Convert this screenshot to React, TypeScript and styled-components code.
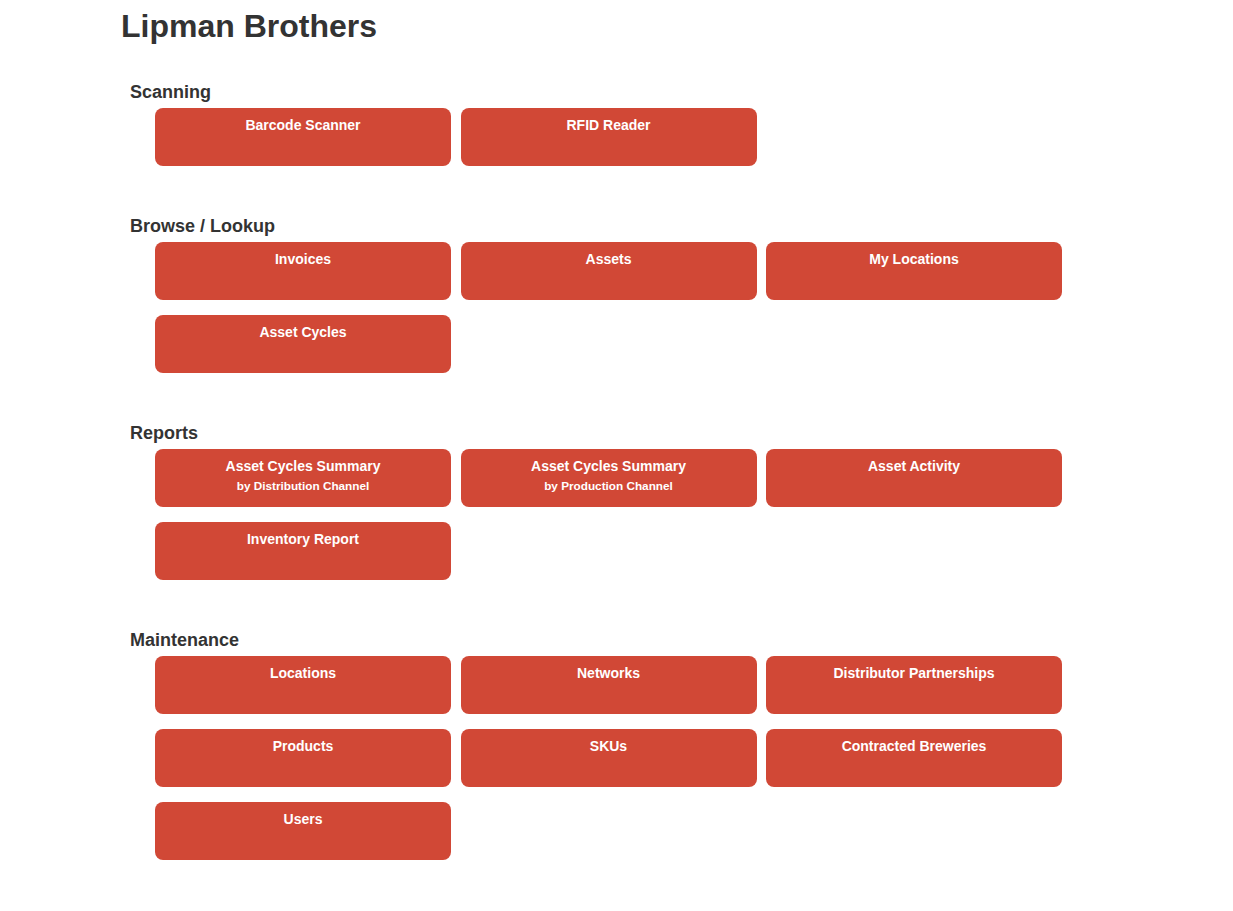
import React from "react";
import styled, { createGlobalStyle } from "styled-components";

const GlobalStyle = createGlobalStyle`
  html, body {
    margin: 0;
    padding: 0;
    background: #ffffff;
  }
  body {
    font-family: "Liberation Sans", Arial, Helvetica, sans-serif;
    color: #333333;
  }
`;

const Page = styled.div`
  padding: 8px 0 40px 121px;
`;

const Title = styled.h1`
  margin: 0;
  font-size: 32px;
  font-weight: bold;
  line-height: normal;
  color: #333333;
`;

const Section = styled.section`
  margin-top: 50px;
  &:first-of-type {
    margin-top: 37px;
  }
`;

const Heading = styled.h2`
  margin: 0 0 6px 9px;
  font-size: 18px;
  font-weight: bold;
  line-height: 20px;
  color: #333333;
`;

const Grid = styled.div`
  margin-left: 34px;
  display: grid;
  grid-template-columns: repeat(3, 296px);
  column-gap: 9.5px;
  row-gap: 15px;
`;

const Tile = styled.a`
  display: block;
  box-sizing: border-box;
  height: 58px;
  padding-top: 9px;
  border-radius: 8px;
  background: #d14836;
  color: #ffffff;
  text-align: center;
  text-decoration: none;
  font-size: 14px;
  font-weight: bold;
  line-height: normal;
  cursor: pointer;
`;

const Sub = styled.span`
  display: block;
  margin-top: 5px;
  font-size: 11.75px;
  line-height: normal;
`;

type Item = { label: string; sub?: string };
type Group = { title: string; items: Item[] };

const groups: Group[] = [
  {
    title: "Scanning",
    items: [{ label: "Barcode Scanner" }, { label: "RFID Reader" }],
  },
  {
    title: "Browse / Lookup",
    items: [
      { label: "Invoices" },
      { label: "Assets" },
      { label: "My Locations" },
      { label: "Asset Cycles" },
    ],
  },
  {
    title: "Reports",
    items: [
      { label: "Asset Cycles Summary", sub: "by Distribution Channel" },
      { label: "Asset Cycles Summary", sub: "by Production Channel" },
      { label: "Asset Activity" },
      { label: "Inventory Report" },
    ],
  },
  {
    title: "Maintenance",
    items: [
      { label: "Locations" },
      { label: "Networks" },
      { label: "Distributor Partnerships" },
      { label: "Products" },
      { label: "SKUs" },
      { label: "Contracted Breweries" },
      { label: "Users" },
    ],
  },
];

export default function App() {
  return (
    <>
      <GlobalStyle />
      <Page>
        <Title>Lipman Brothers</Title>
        {groups.map((g) => (
          <Section key={g.title}>
            <Heading>{g.title}</Heading>
            <Grid>
              {g.items.map((it, i) => (
                <Tile key={i}>
                  {it.label}
                  {it.sub && <Sub>{it.sub}</Sub>}
                </Tile>
              ))}
            </Grid>
          </Section>
        ))}
      </Page>
    </>
  );
}
